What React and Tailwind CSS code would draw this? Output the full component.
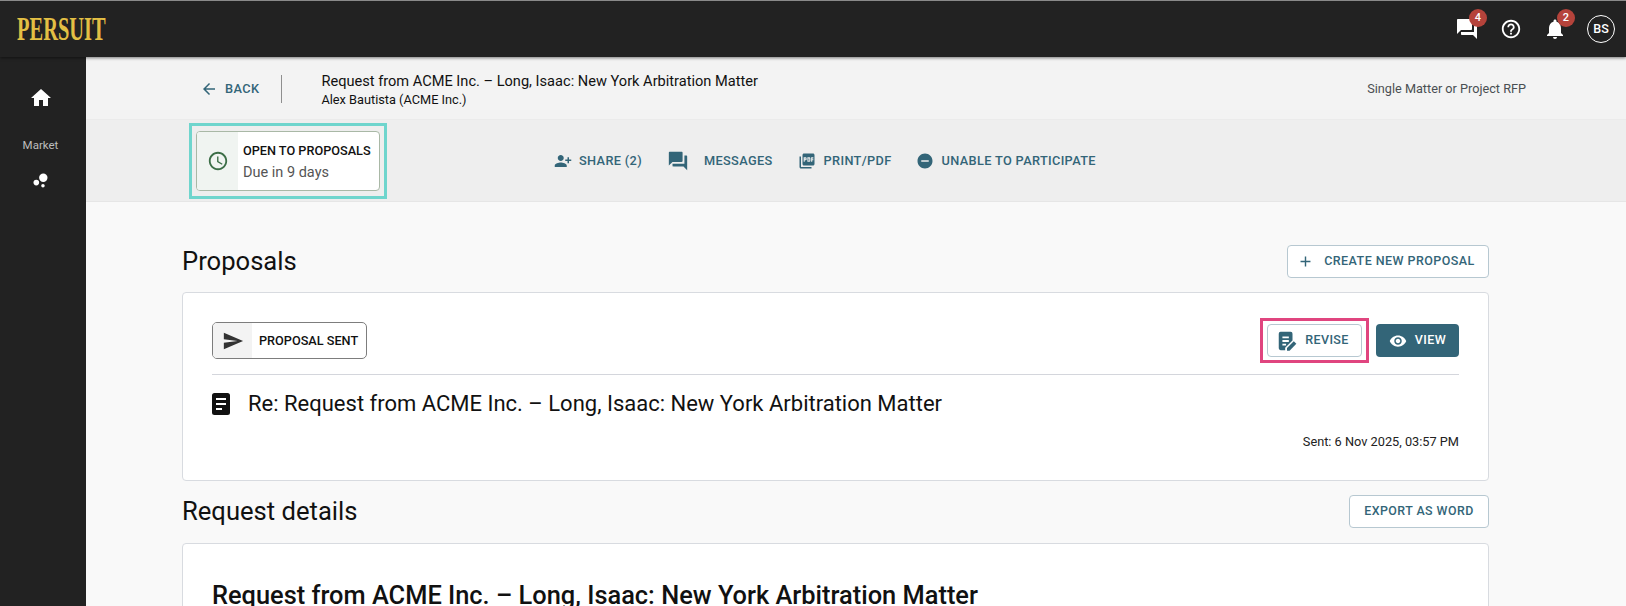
import React from 'react';
import {
    MdHome, MdBubbleChart, MdForum, MdHelpOutline, MdNotifications, MdArrowBack, MdAccessTime,
    MdPersonAddAlt1, MdPictureAsPdf, MdRemoveCircle, MdAdd, MdSend, MdVisibility,
} from 'react-icons/md';

const ReviseIcon = ({ className }) => (
    <svg className={className} viewBox="0 0 24 24" fill="currentColor">
        <path d="M5 2h11a2 2 0 012 2v7.400l-8 8V22H5a2 2 0 01-2-2V4a2 2 0 012-2zm2 5v2h7V7H7zm0 4v2h7v-2H7zm0 4v2h4v-2H7z" fillRule="evenodd" />
        <path d="M12 22.500v-2.800l7.400-7.400 2.800 2.800-7.400 7.400H12z" />
    </svg>
);

const DocIcon = ({ className }) => (
    <svg className={className} viewBox="0 0 18 22" fill="currentColor">
        <path d="M2.5 0h13A2.5 2.5 0 0118 2.5v17a2.5 2.5 0 01-2.5 2.5h-13A2.5 2.5 0 010 19.500v-17A2.500 2.500 0 012.500 0zM4 5v2h10V5H4zm0 5v2h10v-2H4zm0 5v2h6v-2H4z" fillRule="evenodd" />
    </svg>
);

const Badge = ({ value }) => (
    <span className="absolute -top-[8px] -right-[8px] w-[18px] h-[18px] rounded-full bg-[#b5433b] text-white text-[11px] font-medium flex items-center justify-center">
        {value}
    </span>
);

const ToolbarLink = ({ icon, label, className }) => (
    <div className={`flex items-center text-[#336578] text-[12.75px] font-medium tracking-[0.35px] ${className}`}>
        {icon}
        <span>{label}</span>
    </div>
);

export default function App() {
    return (
        <div className="w-full h-[606px] overflow-hidden flex flex-col bg-[#f9f9f9] text-[#111] font-['Roboto',sans-serif]">
            {/* Top bar */}
            <header className="h-[57px] flex-shrink-0 bg-[#222222] border-t border-[#8a8a8a] flex items-center justify-between pl-[17px] pr-[11px] shadow-[0_1px_3px_rgba(0,0,0,0.5)] relative z-10">
                <div className="w-[88px] h-[32px] overflow-visible">
                    <span className="block origin-left scale-x-[0.62] font-['Liberation_Serif',serif] text-[33px] leading-[32px] font-bold text-[#e3bf44] whitespace-nowrap">PERSUIT</span>
                </div>
                <div className="flex items-center text-white">
                    <div className="relative mr-[21px]">
                        <MdForum className="w-[24px] h-[24px]" />
                        <Badge value="4" />
                    </div>
                    <MdHelpOutline className="w-[22px] h-[22px] mr-[21px]" />
                    <div className="relative mr-[20px]">
                        <MdNotifications className="w-[24px] h-[24px]" />
                        <Badge value="2" />
                    </div>
                    <div className="w-[28px] h-[28px] rounded-full border-[1.5px] border-white flex items-center justify-center text-[12.5px] font-medium">BS</div>
                </div>
            </header>

            <div className="flex flex-1 min-h-0">
                {/* Sidebar */}
                <aside className="w-[86px] flex-shrink-0 bg-[#222222] flex flex-col items-center pr-[5px] text-white">
                    <MdHome className="w-[24px] h-[24px] mt-[29px]" />
                    <span className="text-[11.5px] text-[#bdbdbd] mt-[28px] leading-[14px]">Market</span>
                    <MdBubbleChart className="w-[21px] h-[21px] mt-[18px]" />
                </aside>

                <main className="flex-1 min-w-0 flex flex-col">
                    {/* Request header */}
                    <div className="h-[63px] flex-shrink-0 bg-[#f3f3f3] flex items-center pl-[114px] pr-[100px] border-b border-[#ebebeb]">
                        <div className="flex items-center text-[#336578] text-[12.75px] font-medium tracking-[0.4px] pt-[2px]">
                            <MdArrowBack className="w-[18px] h-[18px] mr-[7px]" />
                            <span>BACK</span>
                        </div>
                        <div className="w-px h-[28px] bg-[#8f8f8f] ml-[22px] mr-[39px] mt-[2px]" />
                        <div className="flex-1 pt-[4px]">
                            <p className="text-[14.6px] leading-[18px]">Request from ACME Inc. – Long, Isaac: New York Arbitration Matter</p>
                            <p className="text-[12.75px] leading-[18px] mt-[1px]">Alex Bautista (ACME Inc.)</p>
                        </div>
                        <span className="text-[12.7px] text-[#4a4f52] pt-[1px]">Single Matter or Project RFP</span>
                    </div>

                    {/* Toolbar */}
                    <div className="h-[82px] flex-shrink-0 bg-[#eeeeee] flex items-center pl-[103px] border-b border-[#e6e6e6]">
                        <div className="w-[198px] h-[76px] border-[3px] border-[#6fd5cd] flex items-center justify-center flex-shrink-0">
                            <div className="w-[184px] h-[60px] rounded-[4px] border border-[#a9b8a6] bg-white flex overflow-hidden">
                                <div className="w-[41px] bg-[#f0f4f1] flex items-center justify-center">
                                    <MdAccessTime className="w-[22px] h-[22px] text-[#3c6e47]" />
                                </div>
                                <div className="pl-[5px] pt-[3px] flex flex-col justify-center">
                                    <p className="text-[12.7px] font-medium leading-[18px] whitespace-nowrap">OPEN TO PROPOSALS</p>
                                    <p className="text-[14.5px] text-[#555] leading-[20px] mt-[3px]">Due in 9 days</p>
                                </div>
                            </div>
                        </div>
                        <ToolbarLink className="ml-[167px]" label="SHARE (2)" icon={<MdPersonAddAlt1 className="w-[18px] h-[18px] mr-[7px]" />} />
                        <ToolbarLink className="ml-[25px]" label="MESSAGES" icon={<MdForum className="w-[22px] h-[22px] mr-[15px]" />} />
                        <ToolbarLink className="ml-[25px]" label="PRINT/PDF" icon={<MdPictureAsPdf className="w-[18px] h-[18px] mr-[8px]" />} />
                        <ToolbarLink className="ml-[24px]" label="UNABLE TO PARTICIPATE" icon={<MdRemoveCircle className="w-[18px] h-[18px] mr-[8px]" />} />
                    </div>

                    {/* Content */}
                    <div className="flex-1 min-h-0 overflow-hidden pl-[96px] pr-[137px]">
                        <div className="flex items-center justify-between mt-[43px] h-[33px]">
                            <h2 className="text-[25.6px] font-normal leading-[33px]">Proposals</h2>
                            <button className="h-[33px] w-[202px] pr-[4px] bg-white border border-[#b7c8d1] rounded-[4px] flex items-center justify-center text-[#336578] text-[12.5px] font-medium tracking-[0.45px]">
                                <MdAdd className="w-[17px] h-[17px] mr-[10px]" />
                                CREATE NEW PROPOSAL
                            </button>
                        </div>

                        <section className="mt-[14px] h-[189px] bg-white border border-[#d8dbe0] rounded-[4px] pt-[29px] px-[29px] flex flex-col">
                            <div className="flex items-center justify-between h-[37px]">
                                <div className="w-[155px] h-[37px] border border-[#7d7d7d] rounded-[5px] flex overflow-hidden">
                                    <div className="w-[39px] bg-[#f3f3f3] flex items-center justify-center">
                                        <MdSend className="w-[22px] h-[22px] text-[#333]" />
                                    </div>
                                    <span className="pl-[7px] text-[12.7px] font-medium self-center whitespace-nowrap">PROPOSAL SENT</span>
                                </div>
                                <div className="flex items-center">
                                    <div className="w-[109px] h-[45px] border-[3px] border-[#e0457f] flex items-center justify-center mr-[7px]">
                                        <button className="w-[95px] h-[33px] pr-[4px] border border-[#b7c8d1] rounded-[4px] bg-white flex items-center justify-center text-[#336578] text-[12.5px] font-medium tracking-[0.35px]">
                                            <ReviseIcon className="w-[22px] h-[22px] mr-[7px]" />
                                            REVISE
                                        </button>
                                    </div>
                                    <button className="w-[83px] h-[33px] rounded-[4px] bg-[#336578] text-white flex items-center justify-center text-[12.5px] font-medium tracking-[0.4px]">
                                        <MdVisibility className="w-[18px] h-[18px] mr-[8px]" />
                                        VIEW
                                    </button>
                                </div>
                            </div>
                            <div className="h-px bg-[#d4d6dc] mt-[15px]" />
                            <div className="flex items-center mt-[16px] h-[26px]">
                                <DocIcon className="w-[18px] h-[22px] mr-[18px] flex-shrink-0" />
                                <p className="text-[22px] font-normal leading-[26px] whitespace-nowrap">Re: Request from ACME Inc. – Long, Isaac: New York Arbitration Matter</p>
                            </div>
                            <p className="text-[12.75px] text-right mt-[15px] text-[#222]">Sent: 6 Nov 2025, 03:57 PM</p>
                        </section>

                        <div className="flex items-center justify-between mt-[14px] h-[33px]">
                            <h2 className="text-[25.6px] font-normal leading-[33px]">Request details</h2>
                            <button className="h-[33px] w-[140px] bg-white border border-[#b7c8d1] rounded-[4px] text-[#336578] text-[12.4px] font-medium tracking-[0.45px]">
                                EXPORT AS WORD
                            </button>
                        </div>

                        <section className="mt-[15px] h-[100px] bg-white border border-[#d8dbe0] rounded-[4px] px-[29px] pt-[36px]">
                            <h1 className="text-[25.4px] font-medium leading-[30px] whitespace-nowrap">Request from ACME Inc. – Long, Isaac: New York Arbitration Matter</h1>
                        </section>
                    </div>
                </main>
            </div>
        </div>
    );
}
